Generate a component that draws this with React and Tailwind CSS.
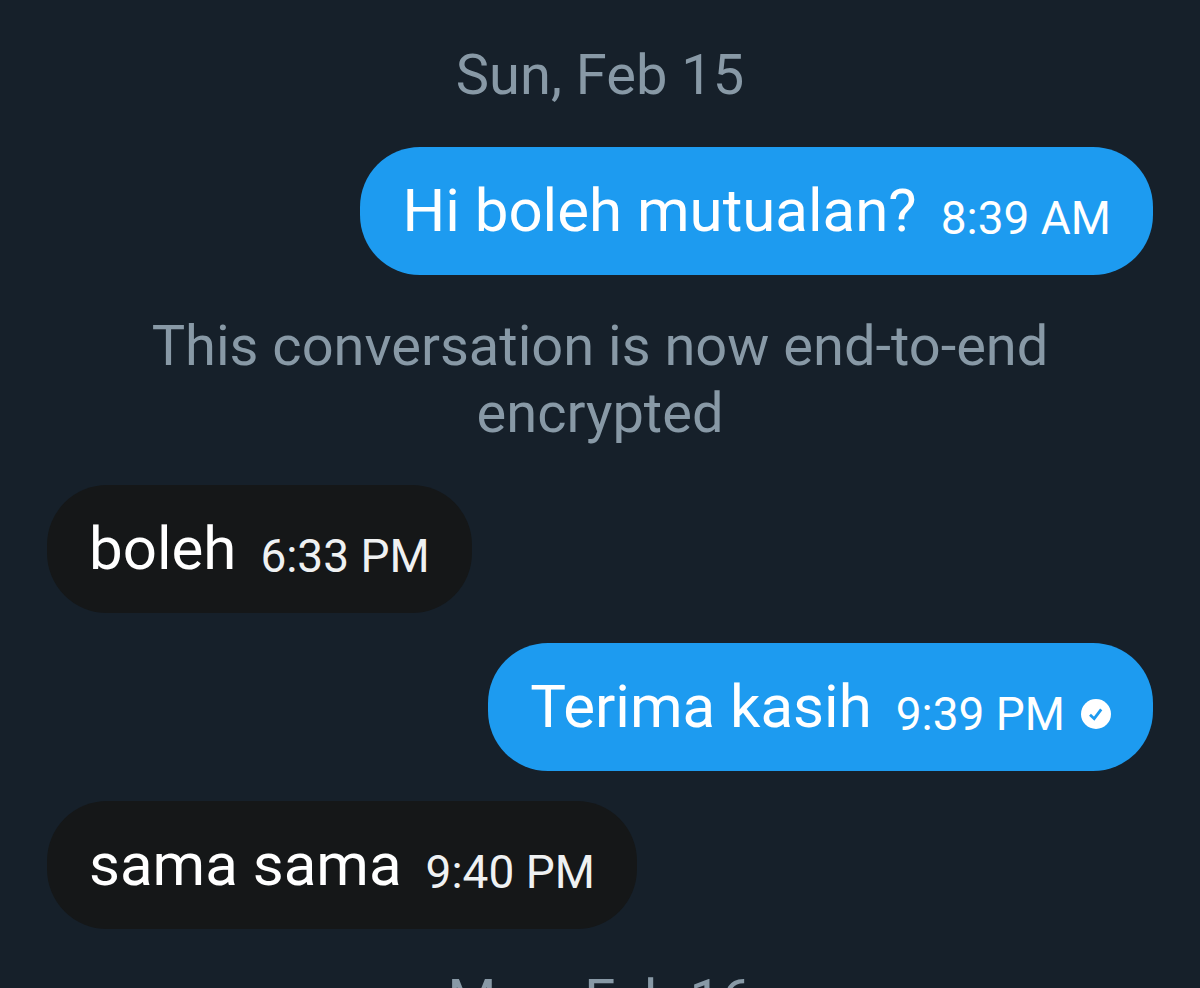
const items = [
  { type: 'notice', text: 'Sun, Feb 15' },
  { type: 'message', mine: true, text: 'Hi boleh mutualan?', time: '8:39 AM' },
  { type: 'notice', text: 'This conversation is now end-to-end encrypted' },
  { type: 'message', mine: false, text: 'boleh', time: '6:33 PM' },
  { type: 'message', mine: true, text: 'Terima kasih', time: '9:39 PM', seen: true },
  { type: 'message', mine: false, text: 'sama sama', time: '9:40 PM' },
  { type: 'notice', text: 'Mon, Feb 16' },
];

const SeenIcon = () => (
  <svg viewBox="0 0 30 30" className="w-[30px] h-[30px] shrink-0" role="img" aria-label="Seen">
    <circle cx="15" cy="15" r="15" fill="#ffffff" />
    <path d="M9 15.8l4.2 3.9 7-9.4" fill="none" stroke="#1d9bf0" strokeWidth="2.8" />
  </svg>
);

const Notice = ({ text }) => (
  <p className="my-2 px-16 text-center text-[56px] leading-[67px] text-[#8899a6]">{text}</p>
);

const Message = ({ mine, text, time, seen }) => (
  <div
    className={`flex items-center gap-6 min-h-32 px-[42px] py-6 rounded-[60px] text-white ${
      mine ? 'self-end bg-[#1d9bf0]' : 'self-start bg-[#151718]'
    }`}
  >
    <p className="text-[60px] leading-[72px]">{text}</p>
    <div className="flex items-center gap-4 pt-[14px] whitespace-nowrap">
      <time className={`text-[46px] leading-[60px] ${mine ? 'text-white' : 'text-[#eff1f2]'}`}>
        {time}
      </time>
      {seen && <SeenIcon />}
    </div>
  </div>
);

const App = () => {
  return (
    <main className="h-screen overflow-hidden bg-[#16202a] font-[Roboto,sans-serif]">
      <div className="flex flex-col gap-[30px] px-[47px] pt-[34px]">
        {items.map((item, i) =>
          item.type === 'notice' ? <Notice key={i} {...item} /> : <Message key={i} {...item} />
        )}
      </div>
    </main>
  );
};

export default App;
